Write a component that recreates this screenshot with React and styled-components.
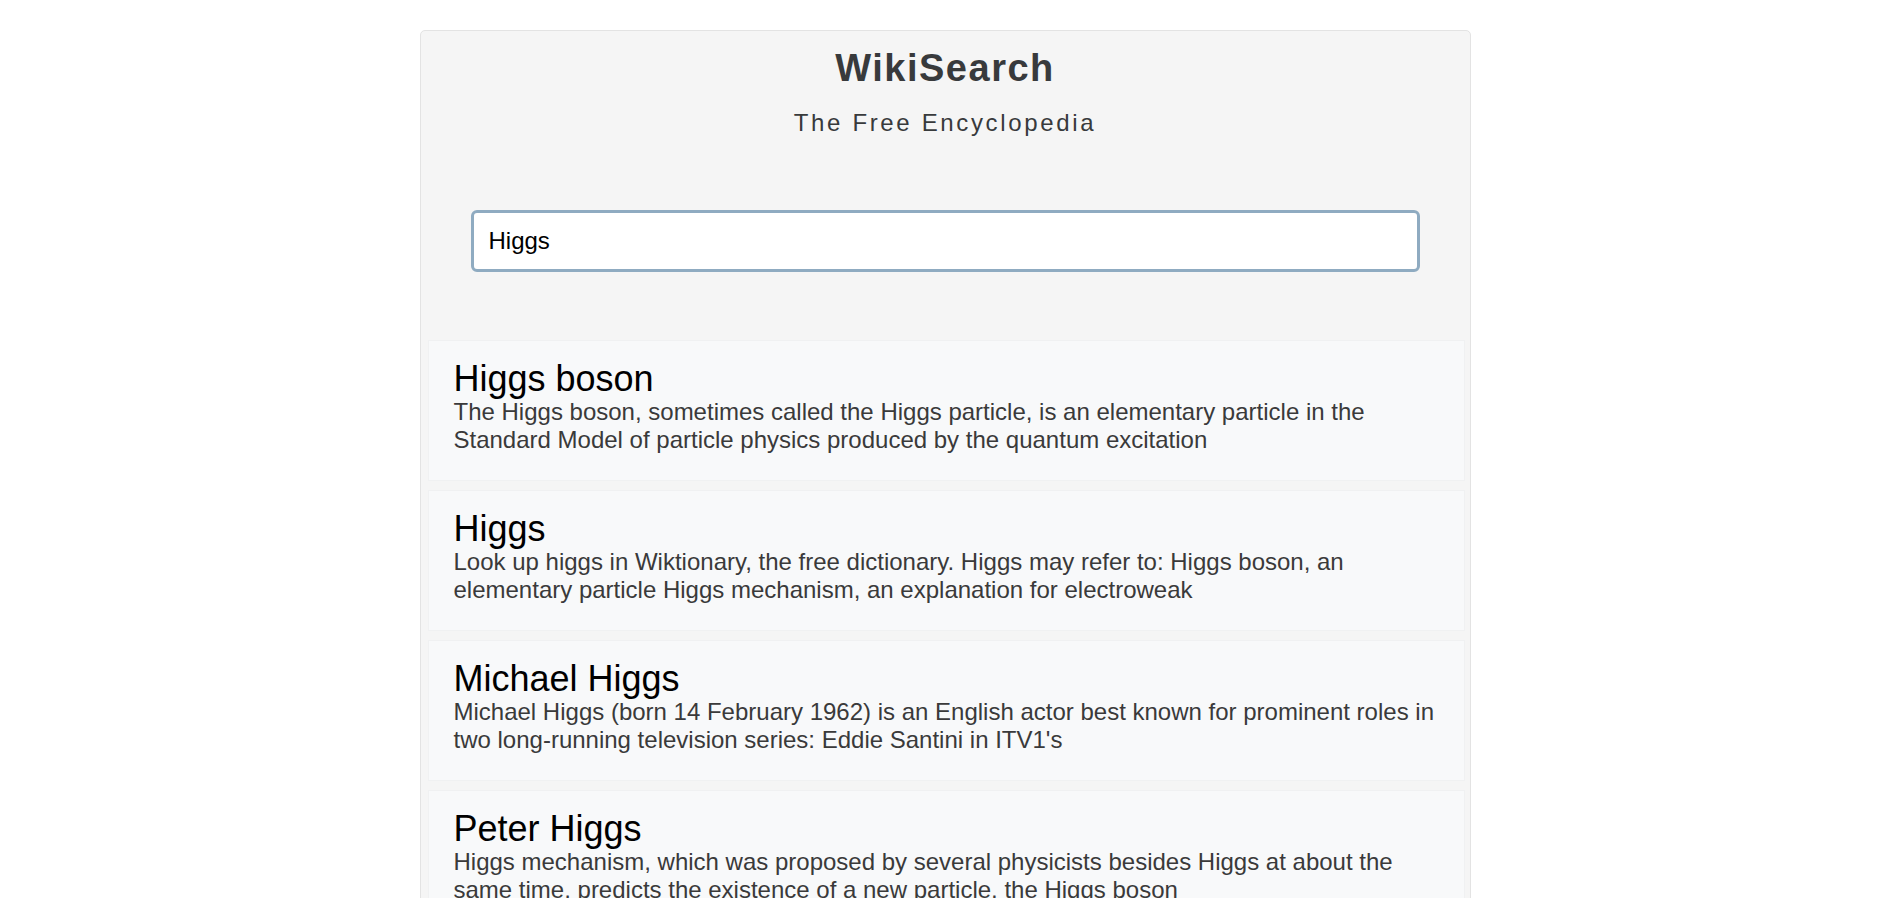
import React from 'react';
import styled, { createGlobalStyle } from 'styled-components';

const GlobalStyle = createGlobalStyle`
    body {
        margin: 0;
        background: #ffffff;
        font-family: "Liberation Sans", Arial, sans-serif;
    }
`

const Page = styled.div`
    display: flex;
    justify-content: center;
    padding-top: 30px;
`

const Wrapper = styled.div`
    width: 1049px;
    background: #f5f5f5;
    border: 1px solid #e3e3e3;
    border-radius: 5px;
    padding-bottom: 20px;
`

const Header = styled.header`
    display: flex;
    flex-direction: column;
    align-items: center;
    padding-top: 16px;
    h1 {
        margin: 0;
        font-size: 38px;
        font-weight: bold;
        letter-spacing: 1.5px;
        color: #383a3c;
    }
    p {
        margin: 19px 0 0;
        font-size: 24px;
        letter-spacing: 2.65px;
        color: #383a3c;
    }
`

const SearchForm = styled.form`
    display: flex;
    justify-content: center;
    padding: 73px 0 68px;
`

const SearchInput = styled.input`
    box-sizing: border-box;
    width: 949px;
    height: 62px;
    border: 3px solid #8fabc1;
    border-radius: 6px;
    padding: 0 15px;
    font-family: "Liberation Sans", Arial, sans-serif;
    font-size: 24px;
    color: #000;
    background: #fff;
    outline: none;
`

const Results = styled.div`
    display: flex;
    flex-direction: column;
    gap: 9px;
    padding: 0 5px 0 7px;
`

const Card = styled.div`
    box-sizing: border-box;
    min-height: 141px;
    background: #f8f9fa;
    border: 1px solid #f0f1f2;
    padding: 19px 25px 26px;
    h2 {
        margin: 0;
        font-size: 36px;
        font-weight: normal;
        line-height: 38px;
        color: #000;
    }
    p {
        margin: 0;
        font-size: 24px;
        line-height: 28px;
        color: #3a3a3a;
    }
`

const results = [
    {
        title: 'Higgs boson',
        snippet: 'The Higgs boson, sometimes called the Higgs particle, is an elementary particle in the Standard Model of particle physics produced by the quantum excitation'
    },
    {
        title: 'Higgs',
        snippet: 'Look up higgs in Wiktionary, the free dictionary. Higgs may refer to: Higgs boson, an elementary particle Higgs mechanism, an explanation for electroweak'
    },
    {
        title: 'Michael Higgs',
        snippet: "Michael Higgs (born 14 February 1962) is an English actor best known for prominent roles in two long-running television series: Eddie Santini in ITV1's"
    },
    {
        title: 'Peter Higgs',
        snippet: 'Higgs mechanism, which was proposed by several physicists besides Higgs at about the same time, predicts the existence of a new particle, the Higgs boson'
    },
    {
        title: 'Higgs mechanism',
        snippet: 'In the Standard Model of particle physics, the Higgs mechanism is essential to explain the generation mechanism of the property "mass" for gauge bosons'
    }
]

export default function App() {
    return (
        <Page>
            <GlobalStyle />
            <Wrapper>
                <Header>
                    <h1>WikiSearch</h1>
                    <p>The Free Encyclopedia</p>
                </Header>
                <SearchForm onSubmit={e => e.preventDefault()}>
                    <SearchInput type="text" defaultValue="Higgs" />
                </SearchForm>
                <Results>
                    {results.map(r => (
                        <Card key={r.title}>
                            <h2>{r.title}</h2>
                            <p>{r.snippet}</p>
                        </Card>
                    ))}
                </Results>
            </Wrapper>
        </Page>
    );
}
